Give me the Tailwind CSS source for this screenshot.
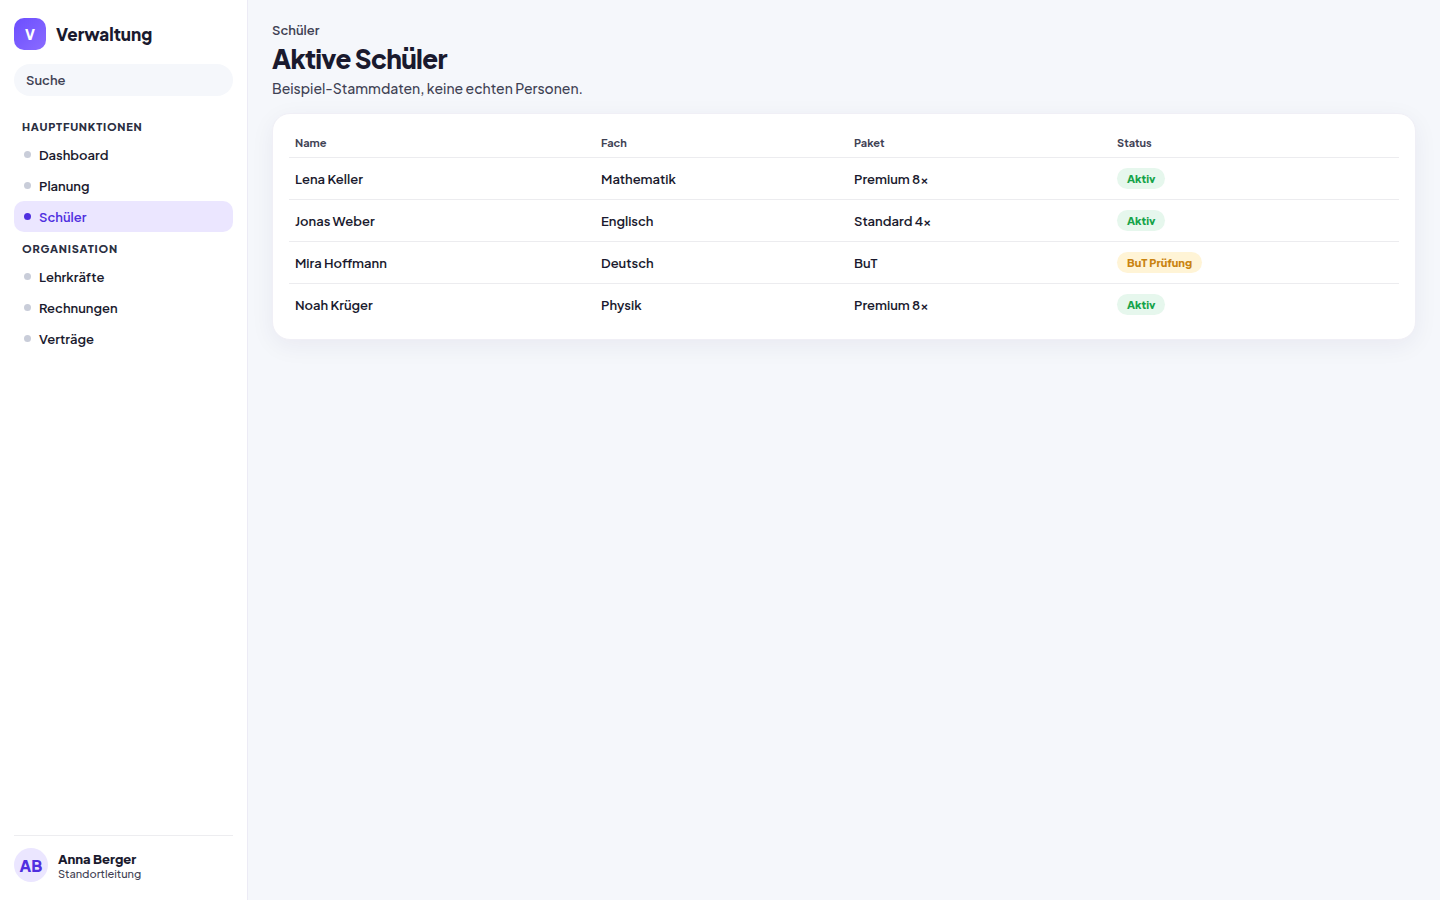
<!DOCTYPE html>
<html lang="de">
<head>
<meta charset="utf-8">
<meta name="viewport" content="width=device-width, initial-scale=1">
<title>Verwaltung – Aktive Schüler</title>
<script src="https://cdn.jsdelivr.net/npm/@tailwindcss/browser@4"></script>
</head>
<body class="flex min-h-screen bg-[#f5f7fb] font-['Plus_Jakarta_Sans','Inter',sans-serif] text-[13px] leading-[21px] text-[#1a1a2e]">
<aside class="flex w-[248px] shrink-0 flex-col border-r border-[#ecebf5] bg-white px-3.5 py-[18px]">
  <div class="flex items-center gap-2.5">
    <div class="flex size-8 items-center justify-center rounded-[10px] bg-linear-135 from-[#6c4dff] to-[#8b6bff] text-sm font-extrabold text-white">V</div>
    <span class="text-[17px] leading-6 font-extrabold">Verwaltung</span>
  </div>
  <input type="search" aria-label="Suche" placeholder="Suche" class="mt-3.5 h-8 w-full rounded-full bg-[#f5f7fb] px-3 text-[13px] font-semibold placeholder:text-[#3f4254]">
  <nav aria-label="Hauptnavigation" class="mt-3.5">
    <h2 class="px-2 pt-2.5 pb-[5px] text-[11px] leading-[14px] font-extrabold tracking-[0.07em] text-[#2b2f42] uppercase">Hauptfunktionen</h2>
    <a href="#" class="flex h-[31px] items-center gap-2 rounded-[10px] px-2.5 font-semibold"><span class="size-[7px] rounded-full bg-[#c9cdd9]"></span><span class="pt-0.5">Dashboard</span></a>
    <a href="#" class="flex h-[31px] items-center gap-2 rounded-[10px] px-2.5 font-semibold"><span class="size-[7px] rounded-full bg-[#c9cdd9]"></span><span class="pt-0.5">Planung</span></a>
    <a href="#" aria-current="page" class="flex h-[31px] items-center gap-2 rounded-[10px] bg-[#ebe6ff] px-2.5 font-semibold text-[#4f2fe0]"><span class="size-[7px] rounded-full bg-[#4f2fe0]"></span><span class="pt-0.5">Schüler</span></a>
    <h2 class="px-2 pt-2.5 pb-[5px] text-[11px] leading-[14px] font-extrabold tracking-[0.07em] text-[#2b2f42] uppercase">Organisation</h2>
    <a href="#" class="flex h-[31px] items-center gap-2 rounded-[10px] px-2.5 font-semibold"><span class="size-[7px] rounded-full bg-[#c9cdd9]"></span><span class="pt-0.5">Lehrkräfte</span></a>
    <a href="#" class="flex h-[31px] items-center gap-2 rounded-[10px] px-2.5 font-semibold"><span class="size-[7px] rounded-full bg-[#c9cdd9]"></span><span class="pt-0.5">Rechnungen</span></a>
    <a href="#" class="flex h-[31px] items-center gap-2 rounded-[10px] px-2.5 font-semibold"><span class="size-[7px] rounded-full bg-[#c9cdd9]"></span><span class="pt-0.5">Verträge</span></a>
  </nav>
  <div class="mt-auto flex items-center gap-2.5 border-t border-[#ededf0] pt-3">
    <div class="flex size-[34px] items-center justify-center rounded-full bg-[#ebe6ff] pt-0.5 text-base font-extrabold text-[#4f2fe0]">AB</div>
    <div class="pt-0.5">
      <div class="text-[13px] leading-4 font-extrabold">Anna Berger</div>
      <div class="text-[11px] leading-[14px] font-medium text-[#3f4254]">Standortleitung</div>
    </div>
  </div>
</aside>
<main class="min-w-0 flex-1 px-6 pt-[22px]">
  <p class="text-[13px] leading-4 font-semibold text-[#3f4254]">Schüler</p>
  <h1 class="mt-1 text-[26px] leading-[34px] font-extrabold tracking-tight">Aktive Schüler</h1>
  <p class="mt-[3px] text-sm leading-[18px] font-medium text-[#3f4254]">Beispiel-Stammdaten, keine echten Personen.</p>
  <section class="mt-4 rounded-[18px] border border-[#f0eff6] bg-white px-4 py-3.5 shadow-[0_6px_24px_rgba(30,20,80,0.06)]">
    <table class="w-full table-fixed text-left">
      <thead class="text-[11px] leading-[14px] text-[#3f4254]">
        <tr class="h-[29px] border-b border-[#ececef]">
          <th scope="col" class="w-[27.57%] px-1.5 pt-px font-bold">Name</th>
          <th scope="col" class="w-[22.79%] px-1.5 pt-px font-bold">Fach</th>
          <th scope="col" class="w-[23.7%] px-1.5 pt-px font-bold">Paket</th>
          <th scope="col" class="px-1.5 pt-px font-bold">Status</th>
        </tr>
      </thead>
      <tbody class="font-semibold">
        <tr class="h-[42px] border-b border-[#ececef]">
          <td class="px-1.5 pt-0.5">Lena Keller</td><td class="px-1.5 pt-0.5">Mathematik</td><td class="px-1.5 pt-0.5">Premium 8×</td>
          <td class="px-1.5"><span class="block w-fit rounded-full bg-[#e6f7ed] px-2.5 text-[11px] leading-[21px] font-extrabold text-[#16a34a]">Aktiv</span></td>
        </tr>
        <tr class="h-[42px] border-b border-[#ececef]">
          <td class="px-1.5 pt-0.5">Jonas Weber</td><td class="px-1.5 pt-0.5">Englisch</td><td class="px-1.5 pt-0.5">Standard 4×</td>
          <td class="px-1.5"><span class="block w-fit rounded-full bg-[#e6f7ed] px-2.5 text-[11px] leading-[21px] font-extrabold text-[#16a34a]">Aktiv</span></td>
        </tr>
        <tr class="h-[42px] border-b border-[#ececef]">
          <td class="px-1.5 pt-0.5">Mira Hoffmann</td><td class="px-1.5 pt-0.5">Deutsch</td><td class="px-1.5 pt-0.5">BuT</td>
          <td class="px-1.5"><span class="block w-fit rounded-full bg-[#fff4d6] px-2.5 text-[11px] leading-[21px] font-extrabold text-[#c98310]">BuT Prüfung</span></td>
        </tr>
        <tr class="h-[42px]">
          <td class="px-1.5 pt-0.5">Noah Krüger</td><td class="px-1.5 pt-0.5">Physik</td><td class="px-1.5 pt-0.5">Premium 8×</td>
          <td class="px-1.5"><span class="block w-fit rounded-full bg-[#e6f7ed] px-2.5 text-[11px] leading-[21px] font-extrabold text-[#16a34a]">Aktiv</span></td>
        </tr>
      </tbody>
    </table>
  </section>
</main>
</body>
</html>
